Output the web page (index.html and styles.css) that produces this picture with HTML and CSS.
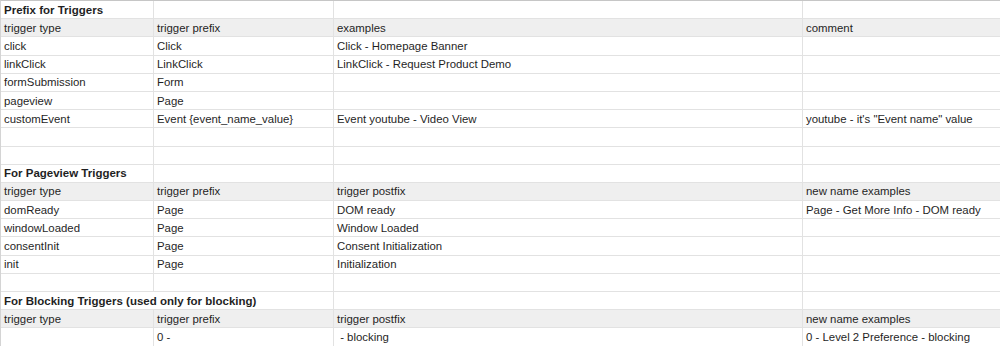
FILE: index.html
```html
<!DOCTYPE html>
<html>
<head>
<meta charset="utf-8">
<link rel="stylesheet" href="styles.css">
</head>
<body>
<div class="sheet">
  <div class="c title">Prefix for Triggers</div><div class="c"></div><div class="c"></div><div class="c"></div>
  <div class="c hd">trigger type</div><div class="c hd">trigger prefix</div><div class="c hd">examples</div><div class="c hd">comment</div>
  <div class="c">click</div><div class="c">Click</div><div class="c">Click - Homepage Banner</div><div class="c"></div>
  <div class="c">linkClick</div><div class="c">LinkClick</div><div class="c">LinkClick - Request Product Demo</div><div class="c"></div>
  <div class="c">formSubmission</div><div class="c">Form</div><div class="c"></div><div class="c"></div>
  <div class="c">pageview</div><div class="c">Page</div><div class="c"></div><div class="c"></div>
  <div class="c">customEvent</div><div class="c">Event {event_name_value}</div><div class="c">Event youtube - Video View</div><div class="c">youtube - it's "Event name" value</div>
  <div class="c"></div><div class="c"></div><div class="c"></div><div class="c"></div>
  <div class="c"></div><div class="c"></div><div class="c"></div><div class="c"></div>
  <div class="c title">For Pageview Triggers</div><div class="c"></div><div class="c"></div><div class="c"></div>
  <div class="c hd">trigger type</div><div class="c hd">trigger prefix</div><div class="c hd">trigger postfix</div><div class="c hd">new name examples</div>
  <div class="c">domReady</div><div class="c">Page</div><div class="c">DOM ready</div><div class="c">Page - Get More Info - DOM ready</div>
  <div class="c">windowLoaded</div><div class="c">Page</div><div class="c">Window Loaded</div><div class="c"></div>
  <div class="c">consentInit</div><div class="c">Page</div><div class="c">Consent Initialization</div><div class="c"></div>
  <div class="c">init</div><div class="c">Page</div><div class="c">Initialization</div><div class="c"></div>
  <div class="c"></div><div class="c"></div><div class="c"></div><div class="c"></div>
  <div class="c title span2">For Blocking Triggers (used only for blocking)</div><div class="c"></div><div class="c"></div>
  <div class="c hd">trigger type</div><div class="c hd">trigger prefix</div><div class="c hd">trigger postfix</div><div class="c hd">new name examples</div>
  <div class="c"></div><div class="c">0 -</div><div class="c">&nbsp;- blocking</div><div class="c">0 - Level 2 Preference - blocking</div>
</div>
</body>
</html>
```

FILE: styles.css
```css
html, body {
  margin: 0;
  padding: 0;
  background: #ffffff;
}
.sheet {
  display: grid;
  grid-template-columns: 153px 180px 469px 198px;
  grid-auto-rows: 18.2px;
  width: 1000px;
  border-top: 1px solid #c6c6c6;
  border-left: 1px solid #d4d4d4;
  box-sizing: border-box;
  font-family: "Liberation Sans", Arial, sans-serif;
  font-size: 11.4px;
  color: #1f1f1f;
}
.c {
  border-right: 1px solid #e2e2e2;
  border-bottom: 1px solid #e2e2e2;
  padding: 0 3px;
  display: flex;
  align-items: center;
  white-space: pre;
  overflow: visible;
  box-sizing: border-box;
}
.hd {
  background: #efefef;
}
.title {
  font-weight: bold;
  font-size: 11.5px;
}
.span2 {
  grid-column: span 2;
}
```
